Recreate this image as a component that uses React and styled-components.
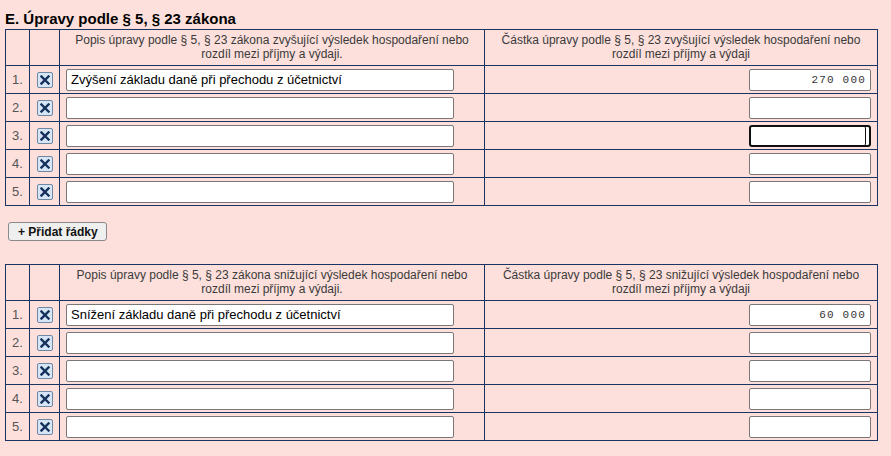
import React from "react";
import styled, { createGlobalStyle } from "styled-components";

const GlobalStyle = createGlobalStyle`
  html, body {
    margin: 0;
    padding: 0;
    background: #fde0dc;
    font-family: "Liberation Sans", Arial, sans-serif;
  }
`;

const Page = styled.div`
  padding: 11px 14px 16px 5px;
`;

const Title = styled.h3`
  margin: 0 0 2px;
  font-size: 15px;
  line-height: 16px;
  font-weight: bold;
  color: #000;
`;

const Table = styled.table`
  width: 872px;
  border-collapse: collapse;
  table-layout: fixed;
  color: #333;
`;

const HeadCell = styled.th`
  border: 1px solid #1c3461;
  font-weight: normal;
  font-size: 12px;
  line-height: 14px;
  padding: 3px 4px 4px;
  text-align: center;
  vertical-align: top;
  color: #3a3a3a;
  white-space: nowrap;
`;

const Cell = styled.td`
  border: 1px solid #1c3461;
  height: 27px;
  padding: 0 6px;
  text-align: ${(p) => p.$align || "left"};
  vertical-align: middle;
`;

const NumCell = styled(Cell)`
  padding: 0 0 0 6px;
  font-size: 13px;
  color: #555;
`;

const DelCell = styled(Cell)`
  padding: 0;
  text-align: center;
`;

const TextInput = styled.input`
  box-sizing: border-box;
  display: block;
  width: 388px;
  height: 22px;
  margin: 0;
  padding: 1px 4px;
  border: 1px solid #7b7777;
  border-radius: 2px;
  background: #fff;
  font-family: "Liberation Sans", Arial, sans-serif;
  font-size: 13px;
  color: #000;
  outline: none;
`;

const AmountInput = styled(TextInput)`
  width: 122px;
  margin-left: auto;
  text-align: right;
  font-family: "Liberation Mono", "DejaVu Sans Mono", monospace;
  font-size: 11px;
  letter-spacing: 1.2px;
  color: #333;
  padding-right: 4px;
  ${(p) =>
    p.$focused &&
    `
    border: 2px solid #101010;
    border-radius: 3px;
    box-shadow: inset -3px 0 0 #fff, inset -4px 0 0 #101010;
  `}
`;

const DelButton = styled.span`
  display: inline-flex;
  box-sizing: border-box;
  width: 16px;
  height: 16px;
  align-items: center;
  justify-content: center;
  background: #d7e6f6;
  border: 1px solid #6f87a3;
  border-radius: 2px;
  vertical-align: middle;
`;

const AddButton = styled.button`
  display: block;
  margin: 16px 0 23px 3px;
  height: 19px;
  padding: 0 8px 0 9px;
  border: 1px solid #8a8a8a;
  border-radius: 3px;
  background: #efefef;
  font-family: "Liberation Sans", Arial, sans-serif;
  font-weight: bold;
  font-size: 12px;
  color: #111;
`;

const XIcon = () => (
  <svg width="10" height="10" viewBox="0 0 10 10">
    <path
      d="M1.5 1.5 L8.5 8.5 M8.5 1.5 L1.5 8.5"
      stroke="#16325c"
      strokeWidth="2.4"
      strokeLinecap="square"
    />
  </svg>
);

const AdjustTable = ({ kind, rows }) => (
  <Table>
    <colgroup>
      <col style={{ width: 24 }} />
      <col style={{ width: 30 }} />
      <col style={{ width: 425 }} />
      <col style={{ width: 393 }} />
    </colgroup>
    <thead>
      <tr>
        <HeadCell />
        <HeadCell />
        <HeadCell>
          Popis úpravy podle § 5, § 23 zákona {kind} výsledek hospodaření nebo
          <br />
          rozdíl mezi příjmy a výdaji.
        </HeadCell>
        <HeadCell>
          Částka úpravy podle § 5, § 23 {kind} výsledek hospodaření nebo
          <br />
          rozdíl mezi příjmy a výdaji
        </HeadCell>
      </tr>
    </thead>
    <tbody>
      {rows.map((r, i) => (
        <tr key={i}>
          <NumCell>{i + 1}.</NumCell>
          <DelCell>
            <DelButton>
              <XIcon />
            </DelButton>
          </DelCell>
          <Cell>
            <TextInput defaultValue={r.text} />
          </Cell>
          <Cell $align="right">
            <AmountInput defaultValue={r.amount} $focused={r.focused} />
          </Cell>
        </tr>
      ))}
    </tbody>
  </Table>
);

const increase = [
  { text: "Zvýšení základu daně při přechodu z účetnictví", amount: "270 000" },
  {},
  { focused: true },
  {},
  {},
];

const decrease = [
  { text: "Snížení základu daně při přechodu z účetnictví", amount: "60 000" },
  {},
  {},
  {},
  {},
];

export default function App() {
  return (
    <Page>
      <GlobalStyle />
      <Title>E. Úpravy podle § 5, § 23 zákona</Title>
      <AdjustTable kind="zvyšující" rows={increase} />
      <AddButton>+ Přidat řádky</AddButton>
      <AdjustTable kind="snižující" rows={decrease} />
    </Page>
  );
}
